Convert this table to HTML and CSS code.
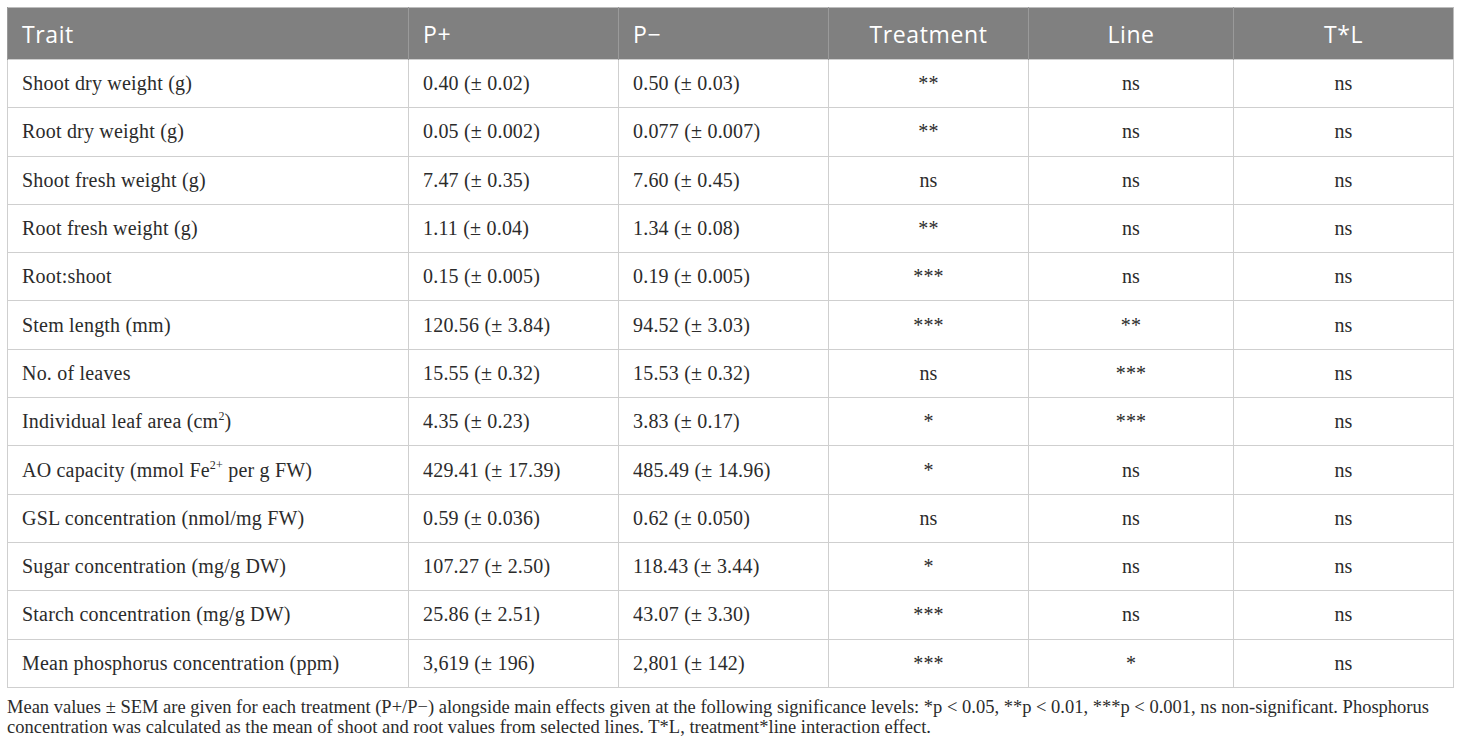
FILE: index.html
```html
<!DOCTYPE html>
<html lang="en">
<head>
    <meta charset="UTF-8">
    <meta name="viewport" content="width=device-width, initial-scale=1.0">
    <title>Table: Phosphorus treatment traits</title>
    <link rel="stylesheet" href="styles.css">
</head>
<body>

    <div class="wrap">
        <table class="traits">
            <colgroup>
                <col class="c-trait">
                <col class="c-p">
                <col class="c-p">
                <col class="c-treat">
                <col class="c-line">
                <col class="c-tl">
            </colgroup>
            <thead>
                <tr>
                    <th>Trait</th>
                    <th>P+</th>
                    <th>P&minus;</th>
                    <th class="mid">Treatment</th>
                    <th class="mid">Line</th>
                    <th class="mid">T*L</th>
                </tr>
            </thead>
            <tbody>
                <tr><td>Shoot dry weight (g)</td><td>0.40 (± 0.02)</td><td>0.50 (± 0.03)</td><td class="mid">**</td><td class="mid">ns</td><td class="mid">ns</td></tr>
                <tr><td>Root dry weight (g)</td><td>0.05 (± 0.002)</td><td>0.077 (± 0.007)</td><td class="mid">**</td><td class="mid">ns</td><td class="mid">ns</td></tr>
                <tr><td>Shoot fresh weight (g)</td><td>7.47 (± 0.35)</td><td>7.60 (± 0.45)</td><td class="mid">ns</td><td class="mid">ns</td><td class="mid">ns</td></tr>
                <tr><td>Root fresh weight (g)</td><td>1.11 (± 0.04)</td><td>1.34 (± 0.08)</td><td class="mid">**</td><td class="mid">ns</td><td class="mid">ns</td></tr>
                <tr><td>Root:shoot</td><td>0.15 (± 0.005)</td><td>0.19 (± 0.005)</td><td class="mid">***</td><td class="mid">ns</td><td class="mid">ns</td></tr>
                <tr><td>Stem length (mm)</td><td>120.56 (± 3.84)</td><td>94.52 (± 3.03)</td><td class="mid">***</td><td class="mid">**</td><td class="mid">ns</td></tr>
                <tr><td>No. of leaves</td><td>15.55 (± 0.32)</td><td>15.53 (± 0.32)</td><td class="mid">ns</td><td class="mid">***</td><td class="mid">ns</td></tr>
                <tr><td>Individual leaf area (cm<sup>2</sup>)</td><td>4.35 (± 0.23)</td><td>3.83 (± 0.17)</td><td class="mid">*</td><td class="mid">***</td><td class="mid">ns</td></tr>
                <tr><td>AO capacity (mmol Fe<sup>2+</sup> per g FW)</td><td>429.41 (± 17.39)</td><td>485.49 (± 14.96)</td><td class="mid">*</td><td class="mid">ns</td><td class="mid">ns</td></tr>
                <tr><td>GSL concentration (nmol/mg FW)</td><td>0.59 (± 0.036)</td><td>0.62 (± 0.050)</td><td class="mid">ns</td><td class="mid">ns</td><td class="mid">ns</td></tr>
                <tr><td>Sugar concentration (mg/g DW)</td><td>107.27 (± 2.50)</td><td>118.43 (± 3.44)</td><td class="mid">*</td><td class="mid">ns</td><td class="mid">ns</td></tr>
                <tr><td>Starch concentration (mg/g DW)</td><td>25.86 (± 2.51)</td><td>43.07 (± 3.30)</td><td class="mid">***</td><td class="mid">ns</td><td class="mid">ns</td></tr>
                <tr><td>Mean phosphorus concentration (ppm)</td><td>3,619 (± 196)</td><td>2,801 (± 142)</td><td class="mid">***</td><td class="mid">*</td><td class="mid">ns</td></tr>
            </tbody>
        </table>

        <p class="note">Mean values ± SEM are given for each treatment (P+/P&minus;) alongside main effects given at the following significance levels: *p &lt; 0.05, **p &lt; 0.01, ***p &lt; 0.001, ns non-significant. Phosphorus concentration was calculated as the mean of shoot and root values from selected lines. T*L, treatment*line interaction effect.</p>
    </div>

</body>
</html>
```

FILE: styles.css
```css
* {
    margin: 0;
    padding: 0;
    box-sizing: border-box;
}

body {
    background: #fff;
    color: #2b2b2b;
    font-family: "Liberation Serif", "Times New Roman", serif;
}

.wrap {
    padding: 7px 7px 0 7px;
}

/* Tabel */
.traits {
    width: 1446px;
    border-collapse: collapse;
    table-layout: fixed;
    border: 1px solid #bdbdbd;
}

.c-trait { width: 401px; }
.c-p { width: 210px; }
.c-treat { width: 200px; }
.c-line { width: 205px; }
.c-tl { width: 220px; }

.traits th {
    background: #808080;
    color: #fff;
    font-family: "Open Sans", "Noto Sans", sans-serif;
    font-weight: 400;
    font-size: 23px;
    letter-spacing: 0.6px;
    text-align: left;
    height: 52px;
    padding: 0 14px;
    border-left: 1px solid #9a9a9a;
    vertical-align: middle;
}

.traits td {
    font-size: 20px;
    letter-spacing: 0.2px;
    height: 48.3px;
    padding: 0 14px;
    border: 1px solid #cfcfcf;
    vertical-align: middle;
    white-space: nowrap;
}

.traits .mid {
    text-align: center;
}

.traits sup {
    font-size: 12px;
    line-height: 0;
    vertical-align: 8px;
}

.note {
    font-size: 18.5px;
    line-height: 20px;
    margin-top: 9px;
    color: #2b2b2b;
}
```
